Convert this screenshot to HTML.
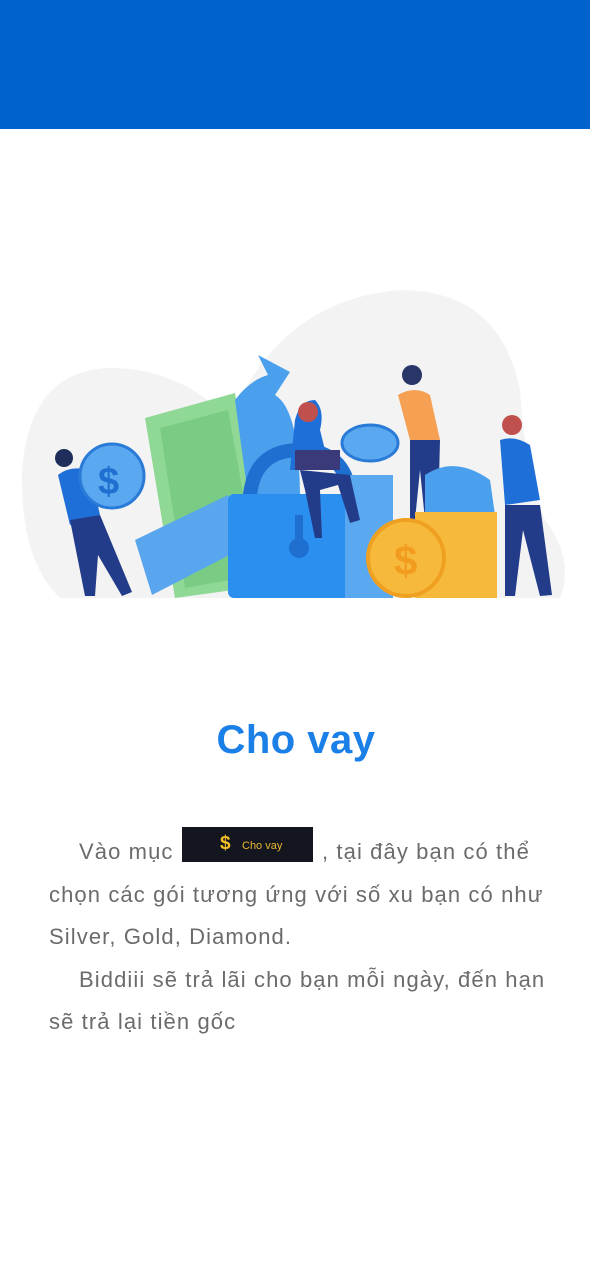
<!DOCTYPE html>
<html><head><meta charset="utf-8"><style>
body{margin:0;width:592px;height:1280px;background:#fff;position:relative;overflow:hidden;font-family:"Liberation Sans",sans-serif}
.hdr{position:absolute;left:0;top:0;width:590px;height:129px;background:#0062cc}
svg{position:absolute;left:0;top:280px}
h1{position:absolute;top:718px;left:0;width:592px;text-align:center;margin:0;font-size:40px;font-weight:bold;color:#1a7fe6;letter-spacing:0.5px}
.l{position:absolute;left:49px;font-size:22px;color:#6b6b6b;white-space:nowrap;letter-spacing:1.1px}
.box{position:absolute;left:182px;top:827px;width:131px;height:35px;background:#14161f;color:#e8b730}
.box b{position:absolute;left:38px;top:6px;font-size:19px;color:#f5c024}
.box span{position:absolute;left:60px;top:13px;font-size:11px}
</style></head><body>
<div class="hdr"></div>
<svg width="592" height="330" viewBox="0 280 592 330">
<path d="M60 598 Q20 560 22 470 Q30 370 110 368 Q180 368 230 420 Q280 300 400 290 Q500 290 520 390 Q525 470 545 520 Q575 560 560 598Z" fill="#f3f3f3"/>
<polygon points="145,418 235,393 270,585 175,598" fill="#8fd896"/>
<polygon points="160,428 228,410 258,575 185,588" fill="#7acc85"/>
<path d="M235 400 Q250 380 268 375 L258 355 L290 372 L275 395 Q300 410 300 500 L250 510Z" fill="#4aa0ec"/>
<polygon points="135,540 228,495 243,548 152,595" fill="#59a6ee"/>
<path d="M250 495 Q255 450 300 450 Q345 450 350 495" fill="none" stroke="#1e6fd0" stroke-width="14"/>
<rect x="228" y="494" width="127" height="104" rx="6" fill="#2b8ff0"/>
<circle cx="299" cy="548" r="10" fill="#1e6fd0"/><rect x="295" y="515" width="8" height="35" fill="#1e6fd0"/>
<rect x="345" y="475" width="48" height="123" fill="#5aa9f0"/>
<ellipse cx="370" cy="443" rx="28" ry="18" fill="#5aa9f0" stroke="#2a7ad8" stroke-width="3"/>
<path d="M295 420 Q300 400 315 400 Q325 410 320 430 L330 470 L290 470Z" fill="#1f6fd8"/>
<circle cx="308" cy="412" r="10" fill="#c0504d"/>
<path d="M300 470 L350 475 L360 520 L350 523 L338 485 L320 490 L322 538 L315 538 L305 490Z" fill="#233c8a"/>
<rect x="295" y="450" width="45" height="20" fill="#3a3a7a"/>
<path d="M398 395 Q415 385 430 395 L440 440 L410 440Z" fill="#f5a052"/>
<circle cx="412" cy="375" r="10" fill="#2a3567"/>
<path d="M410 440 L440 440 L438 520 L425 520 L420 470 L415 520 L410 520Z" fill="#233c8a"/>
<path d="M425 475 Q455 455 490 480 L495 515 L425 515Z" fill="#4aa0ec"/>
<rect x="415" y="512" width="82" height="86" fill="#f6b93b"/>
<circle cx="406" cy="558" r="38" fill="#f6b93b" stroke="#f0a020" stroke-width="4"/>
<text x="394" y="575" font-size="42" font-weight="bold" fill="#f29c1f" font-family="Liberation Sans">$</text>
<path d="M500 440 Q515 435 530 445 L540 500 L505 505Z" fill="#1f6fd8"/>
<circle cx="512" cy="425" r="10" fill="#c0504d"/>
<path d="M505 505 L540 505 L552 595 L540 596 L523 530 L515 596 L505 596Z" fill="#233c8a"/>
<path d="M58 475 Q70 465 90 470 L100 515 L70 525Z" fill="#1f6fd8"/>
<circle cx="64" cy="458" r="9" fill="#1f2d5a"/>
<path d="M70 520 L100 515 L132 592 L122 596 L98 555 L95 596 L85 596Z" fill="#233c8a"/>
<circle cx="112" cy="476" r="32" fill="#5aa9f0" stroke="#2a7ad8" stroke-width="3"/>
<text x="98" y="494" font-size="38" font-weight="bold" fill="#1e6fd0" font-family="Liberation Sans">$</text>
</svg>
<h1>Cho vay</h1>
<div class="l" style="left:79px;top:839px">Vào mục</div>
<div class="box"><b>$</b><span>Cho vay</span></div>
<div class="l" style="left:322px;top:839px">, tại đây bạn có thể</div>
<div class="l" style="top:882px">chọn các gói tương ứng với số xu bạn có như</div>
<div class="l" style="top:924px">Silver, Gold, Diamond.</div>
<div class="l" style="left:79px;top:967px">Biddiii sẽ trả lãi cho bạn mỗi ngày, đến hạn</div>
<div class="l" style="top:1009px">sẽ trả lại tiền gốc</div>
</body></html>
